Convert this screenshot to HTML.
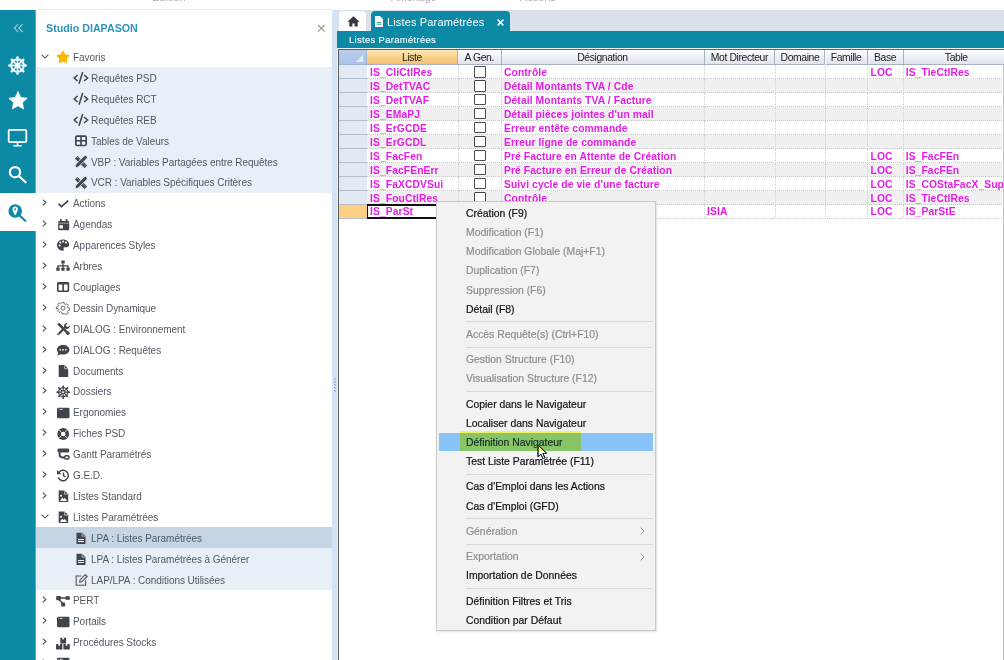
<!DOCTYPE html><html><head><meta charset="utf-8"><style>
*{margin:0;padding:0;box-sizing:border-box}
html,body{width:1004px;height:660px;overflow:hidden;background:#fff;font-family:"Liberation Sans", sans-serif}
.a{position:absolute}
.t{position:absolute;white-space:nowrap}
.tr{position:absolute;left:36px;width:296px;height:20.9px}
.tt{position:absolute;left:73px;top:0;line-height:20.9px;font-size:10px;letter-spacing:-0.05px;color:#535962;white-space:nowrap}
.gr{position:absolute;left:367px;width:636px;height:13.9px}
.gt{position:absolute;top:0.9px;line-height:13.9px;font-size:10.3px;letter-spacing:0.1px;font-weight:bold;color:#e51ee5;white-space:nowrap}
.hd{position:absolute;top:0;height:15.4px;line-height:15px;font-size:10.4px;letter-spacing:-0.4px;color:#222;text-align:center;background:linear-gradient(#fbfcfd,#dfe5ee);border-right:1px solid #a9b3c0;border-bottom:1px solid #a9b3c0}
.mi{position:absolute;left:466px;height:19.16px;line-height:19.16px;font-size:10.4px;white-space:nowrap;color:#121218;-webkit-text-stroke:0.2px currentColor;padding-top:0.6px}
.mi.d{color:#8e8e8e}
.ms{position:absolute;left:466px;width:187px;height:1px;background:#d9d9d9}
</style></head><body>

<div class="t" style="left:152px;top:-9px;font-size:11px;color:#aab">Edition</div>
<div class="t" style="left:391px;top:-9px;font-size:11px;color:#aab">Affichage</div>
<div class="t" style="left:520px;top:-9px;font-size:11px;color:#aab">Actions</div>
<div class="a" style="left:0;top:10px;width:36px;height:650px;background:#0c89a4"></div>
<div class="a" style="left:35px;top:10px;width:1px;height:650px;background:#8d9598"></div>
<div class="a" style="left:0;top:193.1px;width:36px;height:38.2px;background:#fff"></div>
<svg class="a" style="left:0;top:0" width="36" height="40" viewBox="0 0 36 40"><path d="M18.2 24L14.4 28.1 18.2 32.2M22.6 24L18.8 28.1 22.6 32.2" fill="none" stroke="#a6d2dc" stroke-width="1.1"/></svg>
<svg class="a" style="left:8px;top:55.5px" width="19" height="19" viewBox="0 0 19 19"><circle cx="9.5" cy="9.5" r="6.3" fill="none" stroke="#fff" stroke-width="2"/><circle cx="9.5" cy="9.5" r="2" fill="none" stroke="#fff" stroke-width="1.4"/><path d="M9.5 .8v17.4M.8 9.5h17.4M3.3 3.3l12.4 12.4M15.7 3.3L3.3 15.7" stroke="#fff" stroke-width="1.6"/><g fill="#fff"><circle cx="9.5" cy="1.4" r="1.2"/><circle cx="9.5" cy="17.6" r="1.2"/><circle cx="1.4" cy="9.5" r="1.2"/><circle cx="17.6" cy="9.5" r="1.2"/><circle cx="3.8" cy="3.8" r="1.2"/><circle cx="15.2" cy="15.2" r="1.2"/><circle cx="15.2" cy="3.8" r="1.2"/><circle cx="3.8" cy="15.2" r="1.2"/></g></svg>
<svg class="a" style="left:7.6px;top:91.4px" width="20" height="19" viewBox="0 0 20 19"><path d="M10.00 0.60L12.70 6.48L19.13 7.23L14.37 11.62L15.64 17.97L10.00 14.80L4.36 17.97L5.63 11.62L0.87 7.23L7.30 6.48z" fill="#fff" stroke="#fff" stroke-width=".8" stroke-linejoin="round"/></svg>
<svg class="a" style="left:7px;top:128px" width="22" height="19" viewBox="0 0 22 19"><rect x="1.7" y="1.8" width="17.6" height="12.4" rx="1.2" fill="none" stroke="#fff" stroke-width="1.8"/><path d="M10.5 14.5v3M6.3 17.8h8.4" stroke="#fff" stroke-width="1.5"/></svg>
<svg class="a" style="left:7px;top:164px" width="21" height="21" viewBox="0 0 21 21"><circle cx="8" cy="8.2" r="5.1" fill="none" stroke="#fff" stroke-width="2.2"/><path d="M11.8 12l6.8 6.3" stroke="#fff" stroke-width="2.2" stroke-linecap="round"/></svg>
<svg class="a" style="left:7px;top:202px" width="21" height="21" viewBox="0 0 21 21"><circle cx="8.2" cy="9" r="6.8" fill="#0c89a4"/><path d="M12.5 13.5l5.8 5.2" stroke="#0c89a4" stroke-width="2.2" stroke-linecap="round"/><path d="M8.2 4.5a2.7 2.7 0 0 0-2.7 2.7c0 2 2.7 6.3 2.7 6.3s2.7-4.3 2.7-6.3A2.7 2.7 0 0 0 8.2 4.5z" fill="#fff"/><circle cx="8.2" cy="7.2" r="1" fill="#0c89a4"/></svg>
<div class="a" style="left:36px;top:9px;width:296px;height:1px;background:#e3e9ef"></div>
<div class="t" style="left:46px;top:21.5px;font-size:10.7px;font-weight:bold;color:#2b94bb;line-height:13px">Studio DIAPASON</div>
<svg class="a" style="left:316.5px;top:24px" width="9" height="9" viewBox="0 0 9 9"><path d="M1 1l6.6 6.6M7.6 1L1 7.6" stroke="#9a9a9a" stroke-width="1.2"/></svg>
<div class="a" style="left:36px;top:67.45px;width:296px;height:125.40px;background:#e8eff7"></div>
<div class="a" style="left:36px;top:527.25px;width:296px;height:20.90px;background:#c5d5e3"></div>
<div class="a" style="left:36px;top:548.15px;width:296px;height:41.80px;background:#e8eff7"></div>
<div class="tr" style="top:46.55px"><svg style="position:absolute;left:5px;top:7.2px" width="8" height="5" viewBox="0 0 8 5"><path d="M.6 .6L4 4 7.4.6" fill="none" stroke="#4a505a" stroke-width="1.05"/></svg><svg style="position:absolute;left:20px;top:3.75px;overflow:visible" width="14" height="14" viewBox="0 0 14 14"><path d="M7.00 1.15L9.05 4.68L13.05 5.60L10.35 8.70L10.70 12.80L7.00 11.10L3.30 12.80L3.65 8.70L0.95 5.60L4.95 4.68z" fill="#fab800" stroke="#fab800" stroke-width="1" stroke-linejoin="round"/></svg><div class="tt" style="left:37px;top:1.5px">Favoris</div></div>
<div class="tr" style="top:67.45px"><svg style="position:absolute;left:37.2px;top:3.75px;overflow:visible" width="16" height="14" viewBox="0 0 16 14"><path d="M4.6 4L1.2 7l3.4 3M11.1 4l3.5 3-3.5 3M9.7 1.1L6 12.7" fill="none" stroke="#40454d" stroke-width="1.55"/></svg><div class="tt" style="left:55px;top:1.5px">Requêtes PSD</div></div>
<div class="tr" style="top:88.35px"><svg style="position:absolute;left:37.2px;top:3.75px;overflow:visible" width="16" height="14" viewBox="0 0 16 14"><path d="M4.6 4L1.2 7l3.4 3M11.1 4l3.5 3-3.5 3M9.7 1.1L6 12.7" fill="none" stroke="#40454d" stroke-width="1.55"/></svg><div class="tt" style="left:55px;top:1.5px">Requêtes RCT</div></div>
<div class="tr" style="top:109.25px"><svg style="position:absolute;left:37.2px;top:3.75px;overflow:visible" width="16" height="14" viewBox="0 0 16 14"><path d="M4.6 4L1.2 7l3.4 3M11.1 4l3.5 3-3.5 3M9.7 1.1L6 12.7" fill="none" stroke="#40454d" stroke-width="1.55"/></svg><div class="tt" style="left:55px;top:1.5px">Requêtes REB</div></div>
<div class="tr" style="top:130.15px"><svg style="position:absolute;left:37.8px;top:3.75px;overflow:visible" width="14" height="14" viewBox="0 0 14 14"><rect x="1.8" y="2.1" width="10.4" height="9.4" rx="1.2" fill="none" stroke="#40454d" stroke-width="1.6"/><path d="M1.8 6.8h10.4M7 2.1v9.4" stroke="#40454d" stroke-width="1.6"/></svg><div class="tt" style="left:55px;top:1.5px">Tables de Valeurs</div></div>
<div class="tr" style="top:151.05px"><svg style="position:absolute;left:37.8px;top:3.75px;overflow:visible" width="14" height="14" viewBox="0 0 14 14"><path d="M3.47 .93L.93 3.47 10.53 13.07 13.07 10.53z" fill="#40454d"/><path d="M3.9 3.2l-1-1M5.9 5.2l-1-1M9.2 8.5l-1-1M11.2 10.5l-1-1" stroke="#e8eff7" stroke-width=".8"/><path d="M1 12.7l.73-3.27 8.5-8.5a1.8 1.8 0 0 1 2.54 2.54l-8.5 8.5z" fill="#40454d" stroke="#e8eff7" stroke-width=".8"/></svg><div class="tt" style="left:55px;top:1.5px">VBP : Variables Partagées entre Requêtes</div></div>
<div class="tr" style="top:171.95px"><svg style="position:absolute;left:37.8px;top:3.75px;overflow:visible" width="14" height="14" viewBox="0 0 14 14"><path d="M3.47 .93L.93 3.47 10.53 13.07 13.07 10.53z" fill="#40454d"/><path d="M3.9 3.2l-1-1M5.9 5.2l-1-1M9.2 8.5l-1-1M11.2 10.5l-1-1" stroke="#e8eff7" stroke-width=".8"/><path d="M1 12.7l.73-3.27 8.5-8.5a1.8 1.8 0 0 1 2.54 2.54l-8.5 8.5z" fill="#40454d" stroke="#e8eff7" stroke-width=".8"/></svg><div class="tt" style="left:55px;top:1.5px">VCR : Variables Spécifiques Critères</div></div>
<div class="tr" style="top:192.85px"><svg style="position:absolute;left:6px;top:6.5px" width="6" height="7" viewBox="0 0 6 7"><path d="M.8 .6L4 3.5 .8 6.4" fill="none" stroke="#4a505a" stroke-width="1.05"/></svg><svg style="position:absolute;left:20px;top:3.75px;overflow:visible" width="14" height="14" viewBox="0 0 14 14"><path d="M2.6 6.9l2.8 2.8 6.9-6" fill="none" stroke="#40454d" stroke-width="1.7"/></svg><div class="tt" style="left:37px;top:1.5px">Actions</div></div>
<div class="tr" style="top:213.75px"><svg style="position:absolute;left:6px;top:6.5px" width="6" height="7" viewBox="0 0 6 7"><path d="M.8 .6L4 3.5 .8 6.4" fill="none" stroke="#4a505a" stroke-width="1.05"/></svg><svg style="position:absolute;left:20px;top:3.75px;overflow:visible" width="14" height="14" viewBox="0 0 14 14"><rect x="2.2" y="2.9" width="11" height="9.4" rx="1" fill="#40454d"/><rect x="4" y="1.1" width="1.7" height="2.6" fill="#40454d"/><rect x="9.7" y="1.1" width="1.7" height="2.6" fill="#40454d"/><path d="M2.2 5.2h11" stroke="#fff" stroke-width=".5"/><rect x="3.5" y="7.2" width="3.4" height="3.3" fill="#fff"/></svg><div class="tt" style="left:37px;top:1.5px">Agendas</div></div>
<div class="tr" style="top:234.65px"><svg style="position:absolute;left:6px;top:6.5px" width="6" height="7" viewBox="0 0 6 7"><path d="M.8 .6L4 3.5 .8 6.4" fill="none" stroke="#4a505a" stroke-width="1.05"/></svg><svg style="position:absolute;left:20px;top:3.75px;overflow:visible" width="14" height="14" viewBox="0 0 14 14"><path d="M7 1.5C3.7 1.5 1 4 1 7.1c0 3.1 2.6 5.6 5.6 5.6 1.3 0 1.6-.9 1.1-1.7-.5-.8-.1-1.8.9-1.8h1.8c1.6 0 2.8-1.2 2.8-2.8C13.2 3.7 10.4 1.5 7 1.5z" fill="#40454d"/><circle cx="3.7" cy="7.4" r="1" fill="#fff"/><circle cx="4.4" cy="4.6" r="1" fill="#fff"/><circle cx="7.2" cy="3.6" r="1" fill="#fff"/><circle cx="10" cy="4.6" r="1" fill="#fff"/></svg><div class="tt" style="left:37px;top:1.5px">Apparences Styles</div></div>
<div class="tr" style="top:255.55px"><svg style="position:absolute;left:6px;top:6.5px" width="6" height="7" viewBox="0 0 6 7"><path d="M.8 .6L4 3.5 .8 6.4" fill="none" stroke="#4a505a" stroke-width="1.05"/></svg><svg style="position:absolute;left:20px;top:3.75px;overflow:visible" width="14" height="14" viewBox="0 0 14 14"><rect x="5.3" y="1.5" width="3.4" height="3" rx=".5" fill="#40454d"/><path d="M7 4.5v2.3M1.9 6.8h10.2M1.9 6.6v2.3M7 6.6v2.3M12.1 6.6v2.3" fill="none" stroke="#40454d" stroke-width="1.2"/><rect x=".3" y="8.6" width="3.3" height="3.2" rx=".6" fill="#40454d"/><rect x="5.35" y="8.6" width="3.3" height="3.2" rx=".6" fill="#40454d"/><rect x="10.4" y="8.6" width="3.3" height="3.2" rx=".6" fill="#40454d"/></svg><div class="tt" style="left:37px;top:1.5px">Arbres</div></div>
<div class="tr" style="top:276.45px"><svg style="position:absolute;left:6px;top:6.5px" width="6" height="7" viewBox="0 0 6 7"><path d="M.8 .6L4 3.5 .8 6.4" fill="none" stroke="#4a505a" stroke-width="1.05"/></svg><svg style="position:absolute;left:20px;top:3.75px;overflow:visible" width="14" height="14" viewBox="0 0 14 14"><rect x="1.8" y="2.8" width="10.6" height="8.5" rx=".8" fill="none" stroke="#40454d" stroke-width="1.6"/><path d="M1.8 3.4h10.6" stroke="#40454d" stroke-width="2.2"/><path d="M7.1 3v8.3" stroke="#40454d" stroke-width="1.6"/></svg><div class="tt" style="left:37px;top:1.5px">Couplages</div></div>
<div class="tr" style="top:297.35px"><svg style="position:absolute;left:6px;top:6.5px" width="6" height="7" viewBox="0 0 6 7"><path d="M.8 .6L4 3.5 .8 6.4" fill="none" stroke="#4a505a" stroke-width="1.05"/></svg><svg style="position:absolute;left:20px;top:3.75px;overflow:visible" width="14" height="14" viewBox="0 0 14 14"><circle cx="7" cy="7.1" r="2" fill="none" stroke="#5a5f66" stroke-width=".9"/><path d="M6 1.4h2l.35 1.6 1.2.55 1.4-.85 1.4 1.4-.85 1.4.55 1.2 1.6.35v2l-1.6.35-.55 1.2.85 1.4-1.4 1.4-1.4-.85-1.2.55L8 12.8H6l-.35-1.6-1.2-.55-1.4.85-1.4-1.4.85-1.4-.55-1.2L.35 8.1v-2l1.6-.35.55-1.2-.85-1.4 1.4-1.4 1.4.85 1.2-.55z" fill="none" stroke="#5a5f66" stroke-width=".9" stroke-linejoin="round"/></svg><div class="tt" style="left:37px;top:1.5px">Dessin Dynamique</div></div>
<div class="tr" style="top:318.25px"><svg style="position:absolute;left:6px;top:6.5px" width="6" height="7" viewBox="0 0 6 7"><path d="M.8 .6L4 3.5 .8 6.4" fill="none" stroke="#4a505a" stroke-width="1.05"/></svg><svg style="position:absolute;left:20px;top:3.75px;overflow:visible" width="14" height="14" viewBox="0 0 14 14"><path d="M1.6 1.4l1.9-.3 8.2 8.2 1.6.6.6 1.6-1.7 1.7-1.6-.6-.6-1.6L1.8 2.9z" fill="#40454d"/><path d="M2.3 12.2l6.4-6.4" stroke="#40454d" stroke-width="2.2" stroke-linecap="round"/><path d="M8 4.7a3 3 0 0 1 3.7-3.5l-1.8 1.8.4 1.6 1.6.4 1.8-1.8A3 3 0 0 1 10.2 6.9z" fill="#40454d"/><circle cx="2.4" cy="12.1" r=".5" fill="#fff"/></svg><div class="tt" style="left:37px;top:1.5px">DIALOG : Environnement</div></div>
<div class="tr" style="top:339.15px"><svg style="position:absolute;left:6px;top:6.5px" width="6" height="7" viewBox="0 0 6 7"><path d="M.8 .6L4 3.5 .8 6.4" fill="none" stroke="#4a505a" stroke-width="1.05"/></svg><svg style="position:absolute;left:20px;top:3.75px;overflow:visible" width="14" height="14" viewBox="0 0 14 14"><path d="M7 2.1C3.6 2.1 1 4.2 1 6.8c0 1.1.5 2.1 1.3 2.9-.2 1-.9 2-1.3 2.7 1.4 0 2.6-.6 3.4-1.2.8.3 1.7.4 2.6.4 3.5 0 6.4-2.1 6.4-4.8S10.5 2.1 7 2.1z" fill="#40454d"/><circle cx="4.3" cy="6.8" r=".85" fill="#fff"/><circle cx="7.1" cy="6.8" r=".85" fill="#fff"/><circle cx="9.9" cy="6.8" r=".85" fill="#fff"/></svg><div class="tt" style="left:37px;top:1.5px">DIALOG : Requêtes</div></div>
<div class="tr" style="top:360.05px"><svg style="position:absolute;left:6px;top:6.5px" width="6" height="7" viewBox="0 0 6 7"><path d="M.8 .6L4 3.5 .8 6.4" fill="none" stroke="#4a505a" stroke-width="1.05"/></svg><svg style="position:absolute;left:20px;top:3.75px;overflow:visible" width="14" height="14" viewBox="0 0 14 14"><path d="M2.7 1.1h5.9l3.6 3.6v8.2H2.7z" fill="#40454d"/><path d="M8.6 1.3v3.4H12" fill="none" stroke="#fff" stroke-width=".6"/></svg><div class="tt" style="left:37px;top:1.5px">Documents</div></div>
<div class="tr" style="top:380.95px"><svg style="position:absolute;left:6px;top:6.5px" width="6" height="7" viewBox="0 0 6 7"><path d="M.8 .6L4 3.5 .8 6.4" fill="none" stroke="#4a505a" stroke-width="1.05"/></svg><svg style="position:absolute;left:20px;top:3.75px;overflow:visible" width="14" height="14" viewBox="0 0 14 14"><circle cx="7.2" cy="7.2" r="4.5" fill="none" stroke="#40454d" stroke-width="1.3"/><circle cx="7.2" cy="7.2" r="1.5" fill="none" stroke="#40454d" stroke-width="1.1"/><path d="M7.2 1.2v4.5M7.2 8.7v4.5M1.2 7.2h4.5M8.7 7.2h4.5M2.95 2.95l3.2 3.2M8.25 8.25l3.2 3.2M11.45 2.95l-3.2 3.2M6.15 8.25l-3.2 3.2" stroke="#40454d" stroke-width="1.2"/><g fill="#40454d"><circle cx="7.2" cy="1.3" r=".9"/><circle cx="7.2" cy="13.1" r=".9"/><circle cx="1.3" cy="7.2" r=".9"/><circle cx="13.1" cy="7.2" r=".9"/><circle cx="3" cy="3" r=".9"/><circle cx="11.4" cy="11.4" r=".9"/><circle cx="11.4" cy="3" r=".9"/><circle cx="3" cy="11.4" r=".9"/></g></svg><div class="tt" style="left:37px;top:1.5px">Dossiers</div></div>
<div class="tr" style="top:401.85px"><svg style="position:absolute;left:6px;top:6.5px" width="6" height="7" viewBox="0 0 6 7"><path d="M.8 .6L4 3.5 .8 6.4" fill="none" stroke="#4a505a" stroke-width="1.05"/></svg><svg style="position:absolute;left:20px;top:3.75px;overflow:visible" width="14" height="14" viewBox="0 0 14 14"><rect x="1" y="1.7" width="12.5" height="10.6" rx="1.3" fill="#40454d"/><path d="M2.5 3.4h.8M4 3.4h2.6" stroke="#fff" stroke-width=".8"/></svg><div class="tt" style="left:37px;top:1.5px">Ergonomies</div></div>
<div class="tr" style="top:422.75px"><svg style="position:absolute;left:6px;top:6.5px" width="6" height="7" viewBox="0 0 6 7"><path d="M.8 .6L4 3.5 .8 6.4" fill="none" stroke="#4a505a" stroke-width="1.05"/></svg><svg style="position:absolute;left:20px;top:3.75px;overflow:visible" width="14" height="14" viewBox="0 0 14 14"><circle cx="7.2" cy="7" r="5.9" fill="#40454d"/><circle cx="7.2" cy="7" r="2.3" fill="#fff"/><path d="M3.1 2.9l2.3 2.3M11.3 2.9L9 5.2M3.1 11.1l2.3-2.3M11.3 11.1L9 8.8" stroke="#fff" stroke-width=".8"/></svg><div class="tt" style="left:37px;top:1.5px">Fiches PSD</div></div>
<div class="tr" style="top:443.65px"><svg style="position:absolute;left:6px;top:6.5px" width="6" height="7" viewBox="0 0 6 7"><path d="M.8 .6L4 3.5 .8 6.4" fill="none" stroke="#4a505a" stroke-width="1.05"/></svg><svg style="position:absolute;left:20px;top:3.75px;overflow:visible" width="14" height="14" viewBox="0 0 14 14"><rect x="1.5" y="1.5" width="11.7" height="4" rx="1.4" fill="#40454d"/><path d="M3.6 5v2.6c0 2 1 2.9 2.9 2.9h2" fill="none" stroke="#40454d" stroke-width="1.9"/><rect x="8.5" y="8.8" width="4.6" height="3.2" rx="1.6" fill="none" stroke="#40454d" stroke-width="1.5"/></svg><div class="tt" style="left:37px;top:1.5px">Gantt Paramétrés</div></div>
<div class="tr" style="top:464.55px"><svg style="position:absolute;left:6px;top:6.5px" width="6" height="7" viewBox="0 0 6 7"><path d="M.8 .6L4 3.5 .8 6.4" fill="none" stroke="#4a505a" stroke-width="1.05"/></svg><svg style="position:absolute;left:20px;top:3.75px;overflow:visible" width="14" height="14" viewBox="0 0 14 14"><path d="M2.8 4.6A5.2 5.2 0 1 1 2.3 9.4" fill="none" stroke="#40454d" stroke-width="1.5"/><path d="M1 1.9v4.4h4.4z" fill="#40454d"/><path d="M7.5 4.5v3.1l2 1.4" fill="none" stroke="#40454d" stroke-width="1.4"/></svg><div class="tt" style="left:37px;top:1.5px">G.E.D.</div></div>
<div class="tr" style="top:485.45px"><svg style="position:absolute;left:6px;top:6.5px" width="6" height="7" viewBox="0 0 6 7"><path d="M.8 .6L4 3.5 .8 6.4" fill="none" stroke="#4a505a" stroke-width="1.05"/></svg><svg style="position:absolute;left:20px;top:3.75px;overflow:visible" width="14" height="14" viewBox="0 0 14 14"><path d="M2.7 1.6h5.9l3.6 3.6v7.9H2.7z" fill="#40454d"/><path d="M8.6 1.8v3.4H12" fill="none" stroke="#fff" stroke-width=".6"/><path d="M3.9 12l2.3-3.3 1.4 1.4 1.3-1.2 2.1 3.1z" fill="#fff"/><circle cx="5.1" cy="6.7" r="1" fill="#fff"/></svg><div class="tt" style="left:37px;top:1.5px">Listes Standard</div></div>
<div class="tr" style="top:506.35px"><svg style="position:absolute;left:5px;top:7.2px" width="8" height="5" viewBox="0 0 8 5"><path d="M.6 .6L4 4 7.4.6" fill="none" stroke="#4a505a" stroke-width="1.05"/></svg><svg style="position:absolute;left:20px;top:3.75px;overflow:visible" width="14" height="14" viewBox="0 0 14 14"><path d="M2.7 1.6h5.9l3.6 3.6v7.9H2.7z" fill="#40454d"/><path d="M8.6 1.8v3.4H12" fill="none" stroke="#fff" stroke-width=".6"/><path d="M3.9 12l2.3-3.3 1.4 1.4 1.3-1.2 2.1 3.1z" fill="#fff"/><circle cx="5.1" cy="6.7" r="1" fill="#fff"/></svg><div class="tt" style="left:37px;top:1.5px">Listes Paramétrées</div></div>
<div class="tr" style="top:527.25px"><svg style="position:absolute;left:37.5px;top:3.75px;overflow:visible" width="14" height="14" viewBox="0 0 14 14"><path d="M2.5 1.7h5.6l3.4 3.4v7.9h-9z" fill="#40454d"/><path d="M8.1 1.9v3.2h3.2" fill="none" stroke="#fff" stroke-width=".6"/><path d="M4 8.6h6M4 10.6h6" stroke="#fff" stroke-width="1"/></svg><div class="tt" style="left:55px;top:1.5px">LPA : Listes Paramétrées</div></div>
<div class="tr" style="top:548.15px"><svg style="position:absolute;left:37.5px;top:3.75px;overflow:visible" width="14" height="14" viewBox="0 0 14 14"><path d="M2.5 1.7h5.6l3.4 3.4v7.9h-9z" fill="#40454d"/><path d="M8.1 1.9v3.2h3.2" fill="none" stroke="#fff" stroke-width=".6"/><path d="M4 8.6h6M4 10.6h6" stroke="#fff" stroke-width="1"/></svg><div class="tt" style="left:55px;top:1.5px">LPA : Listes Paramétrées à Générer</div></div>
<div class="tr" style="top:569.05px"><svg style="position:absolute;left:37.5px;top:3.75px;overflow:visible" width="14" height="14" viewBox="0 0 14 14"><path d="M7.2 3H2.2v9.2h9.4V7.2" fill="none" stroke="#50555c" stroke-width="1.1"/><path d="M5.6 9.2l.5-2.3 5.2-5.2 1.8 1.8-5.2 5.2z" fill="none" stroke="#50555c" stroke-width="1.1" stroke-linejoin="round"/></svg><div class="tt" style="left:55px;top:1.5px">LAP/LPA : Conditions Utilisées</div></div>
<div class="tr" style="top:589.95px"><svg style="position:absolute;left:6px;top:6.5px" width="6" height="7" viewBox="0 0 6 7"><path d="M.8 .6L4 3.5 .8 6.4" fill="none" stroke="#4a505a" stroke-width="1.05"/></svg><svg style="position:absolute;left:20px;top:3.75px;overflow:visible" width="14" height="14" viewBox="0 0 14 14"><rect x=".2" y="1.9" width="4.5" height="4.3" rx=".6" fill="#40454d"/><rect x="9.5" y="2.2" width="4.3" height="3.6" rx=".6" fill="#40454d"/><rect x="5.2" y="8.6" width="3.9" height="3.9" rx=".6" fill="#40454d"/><path d="M4 4h5.8M2.8 5.5l4.2 4.3" stroke="#40454d" stroke-width="1.4"/></svg><div class="tt" style="left:37px;top:1.5px">PERT</div></div>
<div class="tr" style="top:610.85px"><svg style="position:absolute;left:6px;top:6.5px" width="6" height="7" viewBox="0 0 6 7"><path d="M.8 .6L4 3.5 .8 6.4" fill="none" stroke="#4a505a" stroke-width="1.05"/></svg><svg style="position:absolute;left:20px;top:3.75px;overflow:visible" width="14" height="14" viewBox="0 0 14 14"><rect x="1" y="1.7" width="12.5" height="10.6" rx="1.3" fill="#40454d"/><path d="M2.5 3.4h.8M4 3.4h2.6" stroke="#fff" stroke-width=".8"/></svg><div class="tt" style="left:37px;top:1.5px">Portails</div></div>
<div class="tr" style="top:631.75px"><svg style="position:absolute;left:6px;top:6.5px" width="6" height="7" viewBox="0 0 6 7"><path d="M.8 .6L4 3.5 .8 6.4" fill="none" stroke="#4a505a" stroke-width="1.05"/></svg><svg style="position:absolute;left:20px;top:3.75px;overflow:visible" width="14" height="14" viewBox="0 0 14 14"><rect x="4.3" y="1.7" width="5.8" height="5.8" rx=".4" fill="#40454d"/><rect x="6.4" y="1.7" width="1.6" height="1.7" fill="#fff"/><rect x="0" y="8" width="6.4" height="5.4" rx=".4" fill="#40454d"/><rect x="2.4" y="8" width="1.6" height="1.7" fill="#fff"/><rect x="7.4" y="8" width="6.4" height="5.4" rx=".4" fill="#40454d"/><rect x="9.8" y="8" width="1.6" height="1.7" fill="#fff"/></svg><div class="tt" style="left:37px;top:1.5px">Procédures Stocks</div></div>
<div class="tr" style="top:652.65px"><svg style="position:absolute;left:6px;top:6.5px" width="6" height="7" viewBox="0 0 6 7"><path d="M.8 .6L4 3.5 .8 6.4" fill="none" stroke="#4a505a" stroke-width="1.05"/></svg><svg style="position:absolute;left:20px;top:3.75px;overflow:visible" width="14" height="14" viewBox="0 0 14 14"><rect x="1" y="1.7" width="12.5" height="10.6" rx="1.3" fill="#40454d"/><path d="M2.5 3.4h.8M4 3.4h2.6" stroke="#fff" stroke-width=".8"/></svg></div>
<div class="a" style="left:332px;top:10px;width:6px;height:650px;background:#d3e2f5"></div>
<svg class="a" style="left:333px;top:377px" width="4" height="17" viewBox="0 0 4 17"><path d="M1 1l2 1.5M1 4l2 1.5M1 7l2 1.5M1 10l2 1.5M1 13l2 1.5" stroke="#6b8fc5" stroke-width=".8"/></svg>
<div class="a" style="left:338px;top:10px;width:666px;height:21px;background:#d9e1ea"></div>
<div class="a" style="left:339px;top:11px;width:27px;height:20px;background:#fcfdfd;border-radius:4px 4px 0 0"></div>
<svg class="a" style="left:347px;top:16px" width="13" height="11" viewBox="0 0 13 11"><path d="M6.5 .3L.4 5.8h1.9V10.6h3.1V7.6h2.2v3h3.1V5.8h1.9z" fill="#363944"/></svg>
<div class="a" style="left:371px;top:11px;width:139px;height:20px;background:#0c89a4;border-radius:4px 4px 0 0"></div>
<svg class="a" style="left:375px;top:16px" width="8" height="11" viewBox="0 0 8 11"><path d="M0 0h5l3 3v8H0z" fill="#fff"/><path d="M1.8 6.4h4.4M1.8 8.2h4.4" stroke="#0c89a4" stroke-width=".9"/></svg>
<div class="t" style="left:387px;top:15px;font-size:11px;letter-spacing:0.15px;color:#fff;line-height:14px">Listes Paramétrées</div>
<svg class="a" style="left:497px;top:19px" width="7" height="7" viewBox="0 0 7 7"><path d="M.6 .6l5.8 5.8M6.4 .6L.6 6.4" stroke="#fff" stroke-width="1.5"/></svg>
<div class="a" style="left:336.7px;top:31px;width:667.3px;height:16.8px;background:#0c89a4"></div>
<div class="t" style="left:349px;top:34px;font-size:9.4px;letter-spacing:0.35px;color:#f0fafc;-webkit-text-stroke:0.15px #f0fafc;line-height:12px">Listes Paramétrées</div>
<div class="a" style="left:336.7px;top:47.8px;width:667.3px;height:1.4px;background:#e9f1f5"></div>
<div class="a" style="left:336.7px;top:47.8px;width:1.5px;height:612.2px;background:#eef2f6"></div>
<div class="a" style="left:338.2px;top:49.2px;width:665.8px;height:610.8px;background:#fff;border-left:1px solid #5f5b57;border-top:1px solid #6a625c"></div>
<div class="a" style="left:1002.5px;top:50px;width:1.5px;height:610px;background:#c4c4c4"></div>
<div class="a" style="left:339px;top:50px;width:28px;height:15.4px;background:linear-gradient(#b9cdea,#aac3e8);border-right:1px solid #9fb4d0;border-bottom:1px solid #9fb4d0"></div>
<svg class="a" style="left:356px;top:55px" width="7" height="7" viewBox="0 0 7 7"><path d="M7 0v7H0z" fill="#e6eef8"/></svg>
<div class="hd" style="left:367px;width:91.0px;top:50px;background:linear-gradient(#fde7b4,#f6c16b);border-right-color:#d7a65a;">Liste</div>
<div class="hd" style="left:458px;width:43.5px;top:50px;">A Gen.</div>
<div class="hd" style="left:501.5px;width:203.0px;top:50px;">Désignation</div>
<div class="hd" style="left:704.5px;width:70.9px;top:50px;">Mot Directeur</div>
<div class="hd" style="left:775.4px;width:50.1px;top:50px;">Domaine</div>
<div class="hd" style="left:825.5px;width:42.1px;top:50px;">Famille</div>
<div class="hd" style="left:867.6px;width:36.0px;top:50px;">Base</div>
<div class="hd" style="left:903.6px;width:106.4px;top:50px;">Table</div>
<div class="a" style="left:339px;top:65.40px;width:28px;height:13.92px;background:#e2e9f5;border-bottom:1px solid #b6bfcb"></div>
<div class="a" style="left:367px;top:65.40px;width:635px;height:13.92px;background:#ffffff;border-bottom:1px dotted #c9c9c9"></div>
<div class="a" style="left:457.6px;top:65.40px;width:1px;height:13.92px;border-left:1px dotted #d0d0d0"></div>
<div class="a" style="left:501.1px;top:65.40px;width:1px;height:13.92px;border-left:1px dotted #d0d0d0"></div>
<div class="a" style="left:704.1px;top:65.40px;width:1px;height:13.92px;border-left:1px dotted #d0d0d0"></div>
<div class="a" style="left:775.0px;top:65.40px;width:1px;height:13.92px;border-left:1px dotted #d0d0d0"></div>
<div class="a" style="left:825.1px;top:65.40px;width:1px;height:13.92px;border-left:1px dotted #d0d0d0"></div>
<div class="a" style="left:867.2px;top:65.40px;width:1px;height:13.92px;border-left:1px dotted #d0d0d0"></div>
<div class="a" style="left:903.2px;top:65.40px;width:1px;height:13.92px;border-left:1px dotted #d0d0d0"></div>
<div class="gr" style="top:65.40px"><div class="gt" style="left:3px">IS_CliCtlRes</div><div class="a" style="left:107.3px;top:1px;width:11.3px;height:11.2px;border:1.2px solid #4a4a4a;border-radius:1px;background:#fff"></div><div class="gt" style="left:137px">Contrôle</div><div class="gt" style="left:340px"></div><div class="gt" style="left:503.5px">LOC</div><div class="gt" style="left:538.7px">IS_TieCtlRes</div></div>
<div class="a" style="left:339px;top:79.32px;width:28px;height:13.92px;background:#e2e9f5;border-bottom:1px solid #b6bfcb"></div>
<div class="a" style="left:367px;top:79.32px;width:635px;height:13.92px;background:#f0f0f0;border-bottom:1px dotted #c9c9c9"></div>
<div class="a" style="left:457.6px;top:79.32px;width:1px;height:13.92px;border-left:1px dotted #d0d0d0"></div>
<div class="a" style="left:501.1px;top:79.32px;width:1px;height:13.92px;border-left:1px dotted #d0d0d0"></div>
<div class="a" style="left:704.1px;top:79.32px;width:1px;height:13.92px;border-left:1px dotted #d0d0d0"></div>
<div class="a" style="left:775.0px;top:79.32px;width:1px;height:13.92px;border-left:1px dotted #d0d0d0"></div>
<div class="a" style="left:825.1px;top:79.32px;width:1px;height:13.92px;border-left:1px dotted #d0d0d0"></div>
<div class="a" style="left:867.2px;top:79.32px;width:1px;height:13.92px;border-left:1px dotted #d0d0d0"></div>
<div class="a" style="left:903.2px;top:79.32px;width:1px;height:13.92px;border-left:1px dotted #d0d0d0"></div>
<div class="gr" style="top:79.32px"><div class="gt" style="left:3px">IS_DetTVAC</div><div class="a" style="left:107.3px;top:1px;width:11.3px;height:11.2px;border:1.2px solid #4a4a4a;border-radius:1px;background:#fff"></div><div class="gt" style="left:137px">Détail Montants TVA / Cde</div><div class="gt" style="left:340px"></div><div class="gt" style="left:503.5px"></div><div class="gt" style="left:538.7px"></div></div>
<div class="a" style="left:339px;top:93.24px;width:28px;height:13.92px;background:#e2e9f5;border-bottom:1px solid #b6bfcb"></div>
<div class="a" style="left:367px;top:93.24px;width:635px;height:13.92px;background:#ffffff;border-bottom:1px dotted #c9c9c9"></div>
<div class="a" style="left:457.6px;top:93.24px;width:1px;height:13.92px;border-left:1px dotted #d0d0d0"></div>
<div class="a" style="left:501.1px;top:93.24px;width:1px;height:13.92px;border-left:1px dotted #d0d0d0"></div>
<div class="a" style="left:704.1px;top:93.24px;width:1px;height:13.92px;border-left:1px dotted #d0d0d0"></div>
<div class="a" style="left:775.0px;top:93.24px;width:1px;height:13.92px;border-left:1px dotted #d0d0d0"></div>
<div class="a" style="left:825.1px;top:93.24px;width:1px;height:13.92px;border-left:1px dotted #d0d0d0"></div>
<div class="a" style="left:867.2px;top:93.24px;width:1px;height:13.92px;border-left:1px dotted #d0d0d0"></div>
<div class="a" style="left:903.2px;top:93.24px;width:1px;height:13.92px;border-left:1px dotted #d0d0d0"></div>
<div class="gr" style="top:93.24px"><div class="gt" style="left:3px">IS_DetTVAF</div><div class="a" style="left:107.3px;top:1px;width:11.3px;height:11.2px;border:1.2px solid #4a4a4a;border-radius:1px;background:#fff"></div><div class="gt" style="left:137px">Détail Montants TVA / Facture</div><div class="gt" style="left:340px"></div><div class="gt" style="left:503.5px"></div><div class="gt" style="left:538.7px"></div></div>
<div class="a" style="left:339px;top:107.16px;width:28px;height:13.92px;background:#e2e9f5;border-bottom:1px solid #b6bfcb"></div>
<div class="a" style="left:367px;top:107.16px;width:635px;height:13.92px;background:#f0f0f0;border-bottom:1px dotted #c9c9c9"></div>
<div class="a" style="left:457.6px;top:107.16px;width:1px;height:13.92px;border-left:1px dotted #d0d0d0"></div>
<div class="a" style="left:501.1px;top:107.16px;width:1px;height:13.92px;border-left:1px dotted #d0d0d0"></div>
<div class="a" style="left:704.1px;top:107.16px;width:1px;height:13.92px;border-left:1px dotted #d0d0d0"></div>
<div class="a" style="left:775.0px;top:107.16px;width:1px;height:13.92px;border-left:1px dotted #d0d0d0"></div>
<div class="a" style="left:825.1px;top:107.16px;width:1px;height:13.92px;border-left:1px dotted #d0d0d0"></div>
<div class="a" style="left:867.2px;top:107.16px;width:1px;height:13.92px;border-left:1px dotted #d0d0d0"></div>
<div class="a" style="left:903.2px;top:107.16px;width:1px;height:13.92px;border-left:1px dotted #d0d0d0"></div>
<div class="gr" style="top:107.16px"><div class="gt" style="left:3px">IS_EMaPJ</div><div class="a" style="left:107.3px;top:1px;width:11.3px;height:11.2px;border:1.2px solid #4a4a4a;border-radius:1px;background:#fff"></div><div class="gt" style="left:137px">Détail pièces jointes d'un mail</div><div class="gt" style="left:340px"></div><div class="gt" style="left:503.5px"></div><div class="gt" style="left:538.7px"></div></div>
<div class="a" style="left:339px;top:121.08px;width:28px;height:13.92px;background:#e2e9f5;border-bottom:1px solid #b6bfcb"></div>
<div class="a" style="left:367px;top:121.08px;width:635px;height:13.92px;background:#ffffff;border-bottom:1px dotted #c9c9c9"></div>
<div class="a" style="left:457.6px;top:121.08px;width:1px;height:13.92px;border-left:1px dotted #d0d0d0"></div>
<div class="a" style="left:501.1px;top:121.08px;width:1px;height:13.92px;border-left:1px dotted #d0d0d0"></div>
<div class="a" style="left:704.1px;top:121.08px;width:1px;height:13.92px;border-left:1px dotted #d0d0d0"></div>
<div class="a" style="left:775.0px;top:121.08px;width:1px;height:13.92px;border-left:1px dotted #d0d0d0"></div>
<div class="a" style="left:825.1px;top:121.08px;width:1px;height:13.92px;border-left:1px dotted #d0d0d0"></div>
<div class="a" style="left:867.2px;top:121.08px;width:1px;height:13.92px;border-left:1px dotted #d0d0d0"></div>
<div class="a" style="left:903.2px;top:121.08px;width:1px;height:13.92px;border-left:1px dotted #d0d0d0"></div>
<div class="gr" style="top:121.08px"><div class="gt" style="left:3px">IS_ErGCDE</div><div class="a" style="left:107.3px;top:1px;width:11.3px;height:11.2px;border:1.2px solid #4a4a4a;border-radius:1px;background:#fff"></div><div class="gt" style="left:137px">Erreur entête commande</div><div class="gt" style="left:340px"></div><div class="gt" style="left:503.5px"></div><div class="gt" style="left:538.7px"></div></div>
<div class="a" style="left:339px;top:135.00px;width:28px;height:13.92px;background:#e2e9f5;border-bottom:1px solid #b6bfcb"></div>
<div class="a" style="left:367px;top:135.00px;width:635px;height:13.92px;background:#f0f0f0;border-bottom:1px dotted #c9c9c9"></div>
<div class="a" style="left:457.6px;top:135.00px;width:1px;height:13.92px;border-left:1px dotted #d0d0d0"></div>
<div class="a" style="left:501.1px;top:135.00px;width:1px;height:13.92px;border-left:1px dotted #d0d0d0"></div>
<div class="a" style="left:704.1px;top:135.00px;width:1px;height:13.92px;border-left:1px dotted #d0d0d0"></div>
<div class="a" style="left:775.0px;top:135.00px;width:1px;height:13.92px;border-left:1px dotted #d0d0d0"></div>
<div class="a" style="left:825.1px;top:135.00px;width:1px;height:13.92px;border-left:1px dotted #d0d0d0"></div>
<div class="a" style="left:867.2px;top:135.00px;width:1px;height:13.92px;border-left:1px dotted #d0d0d0"></div>
<div class="a" style="left:903.2px;top:135.00px;width:1px;height:13.92px;border-left:1px dotted #d0d0d0"></div>
<div class="gr" style="top:135.00px"><div class="gt" style="left:3px">IS_ErGCDL</div><div class="a" style="left:107.3px;top:1px;width:11.3px;height:11.2px;border:1.2px solid #4a4a4a;border-radius:1px;background:#fff"></div><div class="gt" style="left:137px">Erreur ligne de commande</div><div class="gt" style="left:340px"></div><div class="gt" style="left:503.5px"></div><div class="gt" style="left:538.7px"></div></div>
<div class="a" style="left:339px;top:148.92px;width:28px;height:13.92px;background:#e2e9f5;border-bottom:1px solid #b6bfcb"></div>
<div class="a" style="left:367px;top:148.92px;width:635px;height:13.92px;background:#ffffff;border-bottom:1px dotted #c9c9c9"></div>
<div class="a" style="left:457.6px;top:148.92px;width:1px;height:13.92px;border-left:1px dotted #d0d0d0"></div>
<div class="a" style="left:501.1px;top:148.92px;width:1px;height:13.92px;border-left:1px dotted #d0d0d0"></div>
<div class="a" style="left:704.1px;top:148.92px;width:1px;height:13.92px;border-left:1px dotted #d0d0d0"></div>
<div class="a" style="left:775.0px;top:148.92px;width:1px;height:13.92px;border-left:1px dotted #d0d0d0"></div>
<div class="a" style="left:825.1px;top:148.92px;width:1px;height:13.92px;border-left:1px dotted #d0d0d0"></div>
<div class="a" style="left:867.2px;top:148.92px;width:1px;height:13.92px;border-left:1px dotted #d0d0d0"></div>
<div class="a" style="left:903.2px;top:148.92px;width:1px;height:13.92px;border-left:1px dotted #d0d0d0"></div>
<div class="gr" style="top:148.92px"><div class="gt" style="left:3px">IS_FacFen</div><div class="a" style="left:107.3px;top:1px;width:11.3px;height:11.2px;border:1.2px solid #4a4a4a;border-radius:1px;background:#fff"></div><div class="gt" style="left:137px">Pré Facture en Attente de Création</div><div class="gt" style="left:340px"></div><div class="gt" style="left:503.5px">LOC</div><div class="gt" style="left:538.7px">IS_FacFEn</div></div>
<div class="a" style="left:339px;top:162.84px;width:28px;height:13.92px;background:#e2e9f5;border-bottom:1px solid #b6bfcb"></div>
<div class="a" style="left:367px;top:162.84px;width:635px;height:13.92px;background:#f0f0f0;border-bottom:1px dotted #c9c9c9"></div>
<div class="a" style="left:457.6px;top:162.84px;width:1px;height:13.92px;border-left:1px dotted #d0d0d0"></div>
<div class="a" style="left:501.1px;top:162.84px;width:1px;height:13.92px;border-left:1px dotted #d0d0d0"></div>
<div class="a" style="left:704.1px;top:162.84px;width:1px;height:13.92px;border-left:1px dotted #d0d0d0"></div>
<div class="a" style="left:775.0px;top:162.84px;width:1px;height:13.92px;border-left:1px dotted #d0d0d0"></div>
<div class="a" style="left:825.1px;top:162.84px;width:1px;height:13.92px;border-left:1px dotted #d0d0d0"></div>
<div class="a" style="left:867.2px;top:162.84px;width:1px;height:13.92px;border-left:1px dotted #d0d0d0"></div>
<div class="a" style="left:903.2px;top:162.84px;width:1px;height:13.92px;border-left:1px dotted #d0d0d0"></div>
<div class="gr" style="top:162.84px"><div class="gt" style="left:3px">IS_FacFEnErr</div><div class="a" style="left:107.3px;top:1px;width:11.3px;height:11.2px;border:1.2px solid #4a4a4a;border-radius:1px;background:#fff"></div><div class="gt" style="left:137px">Pré Facture en Erreur de Création</div><div class="gt" style="left:340px"></div><div class="gt" style="left:503.5px">LOC</div><div class="gt" style="left:538.7px">IS_FacFEn</div></div>
<div class="a" style="left:339px;top:176.76px;width:28px;height:13.92px;background:#e2e9f5;border-bottom:1px solid #b6bfcb"></div>
<div class="a" style="left:367px;top:176.76px;width:635px;height:13.92px;background:#ffffff;border-bottom:1px dotted #c9c9c9"></div>
<div class="a" style="left:457.6px;top:176.76px;width:1px;height:13.92px;border-left:1px dotted #d0d0d0"></div>
<div class="a" style="left:501.1px;top:176.76px;width:1px;height:13.92px;border-left:1px dotted #d0d0d0"></div>
<div class="a" style="left:704.1px;top:176.76px;width:1px;height:13.92px;border-left:1px dotted #d0d0d0"></div>
<div class="a" style="left:775.0px;top:176.76px;width:1px;height:13.92px;border-left:1px dotted #d0d0d0"></div>
<div class="a" style="left:825.1px;top:176.76px;width:1px;height:13.92px;border-left:1px dotted #d0d0d0"></div>
<div class="a" style="left:867.2px;top:176.76px;width:1px;height:13.92px;border-left:1px dotted #d0d0d0"></div>
<div class="a" style="left:903.2px;top:176.76px;width:1px;height:13.92px;border-left:1px dotted #d0d0d0"></div>
<div class="gr" style="top:176.76px"><div class="gt" style="left:3px">IS_FaXCDVSui</div><div class="a" style="left:107.3px;top:1px;width:11.3px;height:11.2px;border:1.2px solid #4a4a4a;border-radius:1px;background:#fff"></div><div class="gt" style="left:137px">Suivi cycle de vie d'une facture</div><div class="gt" style="left:340px"></div><div class="gt" style="left:503.5px">LOC</div><div class="gt" style="left:538.7px">IS_COStaFacX_Sup</div></div>
<div class="a" style="left:339px;top:190.68px;width:28px;height:13.92px;background:#e2e9f5;border-bottom:1px solid #b6bfcb"></div>
<div class="a" style="left:367px;top:190.68px;width:635px;height:13.92px;background:#f0f0f0;border-bottom:1px dotted #c9c9c9"></div>
<div class="a" style="left:457.6px;top:190.68px;width:1px;height:13.92px;border-left:1px dotted #d0d0d0"></div>
<div class="a" style="left:501.1px;top:190.68px;width:1px;height:13.92px;border-left:1px dotted #d0d0d0"></div>
<div class="a" style="left:704.1px;top:190.68px;width:1px;height:13.92px;border-left:1px dotted #d0d0d0"></div>
<div class="a" style="left:775.0px;top:190.68px;width:1px;height:13.92px;border-left:1px dotted #d0d0d0"></div>
<div class="a" style="left:825.1px;top:190.68px;width:1px;height:13.92px;border-left:1px dotted #d0d0d0"></div>
<div class="a" style="left:867.2px;top:190.68px;width:1px;height:13.92px;border-left:1px dotted #d0d0d0"></div>
<div class="a" style="left:903.2px;top:190.68px;width:1px;height:13.92px;border-left:1px dotted #d0d0d0"></div>
<div class="gr" style="top:190.68px"><div class="gt" style="left:3px">IS_FouCtlRes</div><div class="a" style="left:107.3px;top:1px;width:11.3px;height:11.2px;border:1.2px solid #4a4a4a;border-radius:1px;background:#fff"></div><div class="gt" style="left:137px">Contrôle</div><div class="gt" style="left:340px"></div><div class="gt" style="left:503.5px">LOC</div><div class="gt" style="left:538.7px">IS_TieCtlRes</div></div>
<div class="a" style="left:339px;top:204.60px;width:28px;height:13.92px;background:#fdd083;border-bottom:1px solid #b6bfcb"></div>
<div class="a" style="left:367px;top:204.60px;width:635px;height:13.92px;background:#ffffff;border-bottom:1px dotted #c9c9c9"></div>
<div class="a" style="left:457.6px;top:204.60px;width:1px;height:13.92px;border-left:1px dotted #d0d0d0"></div>
<div class="a" style="left:501.1px;top:204.60px;width:1px;height:13.92px;border-left:1px dotted #d0d0d0"></div>
<div class="a" style="left:704.1px;top:204.60px;width:1px;height:13.92px;border-left:1px dotted #d0d0d0"></div>
<div class="a" style="left:775.0px;top:204.60px;width:1px;height:13.92px;border-left:1px dotted #d0d0d0"></div>
<div class="a" style="left:825.1px;top:204.60px;width:1px;height:13.92px;border-left:1px dotted #d0d0d0"></div>
<div class="a" style="left:867.2px;top:204.60px;width:1px;height:13.92px;border-left:1px dotted #d0d0d0"></div>
<div class="a" style="left:903.2px;top:204.60px;width:1px;height:13.92px;border-left:1px dotted #d0d0d0"></div>
<div class="gr" style="top:204.60px"><div class="gt" style="left:3px">IS_ParSt</div><div class="a" style="left:107.3px;top:1px;width:11.3px;height:11.2px;border:1.2px solid #4a4a4a;border-radius:1px;background:#fff"></div><div class="gt" style="left:137px"></div><div class="gt" style="left:340px">ISIA</div><div class="gt" style="left:503.5px">LOC</div><div class="gt" style="left:538.7px">IS_ParStE</div></div>
<div class="a" style="left:367px;top:203.60px;width:91px;height:15.42px;border:2px solid #111;border-left:1.4px solid #111;border-right:none"></div>
<div class="a" style="left:436px;top:201.4px;width:220px;height:430px;background:#f2f2f2;border:1px solid #cacaca;box-shadow:1px 1px 2px rgba(0,0,0,.12)"></div>
<div class="mi" style="top:203.40px">Création (F9)</div>
<div class="mi d" style="top:222.56px">Modification (F1)</div>
<div class="mi d" style="top:241.72px">Modification Globale (Maj+F1)</div>
<div class="mi d" style="top:260.88px">Duplication (F7)</div>
<div class="mi d" style="top:280.04px">Suppression (F6)</div>
<div class="mi" style="top:299.20px">Détail (F8)</div>
<div class="ms" style="top:321.41px"></div>
<div class="mi d" style="top:324.46px">Accès Requête(s) (Ctrl+F10)</div>
<div class="ms" style="top:346.67px"></div>
<div class="mi d" style="top:349.72px">Gestion Structure (F10)</div>
<div class="mi d" style="top:368.88px">Visualisation Structure (F12)</div>
<div class="ms" style="top:391.09px"></div>
<div class="mi" style="top:394.14px">Copier dans le Navigateur</div>
<div class="mi" style="top:413.30px">Localiser dans Navigateur</div>
<div class="a" style="left:438.5px;top:432.7px;width:214.5px;height:18.5px;background:#89c4f8"></div>
<div class="mi" style="top:432.46px;color:#13305a">Définition Navigateur</div>
<div class="mi" style="top:451.62px">Test Liste Paramétrée (F11)</div>
<div class="ms" style="top:473.83px"></div>
<div class="mi" style="top:476.88px">Cas d'Emploi dans les Actions</div>
<div class="mi" style="top:496.04px">Cas d'Emploi (GFD)</div>
<div class="ms" style="top:518.25px"></div>
<div class="mi d" style="top:521.30px">Génération</div>
<svg class="a" style="left:640px;top:527.30px" width="5" height="8" viewBox="0 0 5 8"><path d="M.6 .6L4 4 .6 7.4" fill="none" stroke="#9a9a9a" stroke-width="1"/></svg>
<div class="ms" style="top:543.51px"></div>
<div class="mi d" style="top:546.56px">Exportation</div>
<svg class="a" style="left:640px;top:552.56px" width="5" height="8" viewBox="0 0 5 8"><path d="M.6 .6L4 4 .6 7.4" fill="none" stroke="#9a9a9a" stroke-width="1"/></svg>
<div class="mi" style="top:565.72px">Importation de Données</div>
<div class="ms" style="top:587.93px"></div>
<div class="mi" style="top:590.98px">Définition Filtres et Tris</div>
<div class="mi" style="top:610.14px">Condition par Défaut</div>
<svg class="a" style="left:537.2px;top:444.2px;overflow:visible" width="14" height="16" viewBox="0 0 14 16"><defs><clipPath id="cy"><rect x="-2" y="-2" width="20" height="9.1"/></clipPath></defs><path d="M1 1v12l2.9-2.7 2.1 4.4 1.9-.9-2-4.3h4z" fill="#fff" stroke="#1f1f1f" stroke-width="1" stroke-linejoin="round"/><path d="M1 1v12l2.9-2.7 2.1 4.4 1.9-.9-2-4.3h4z" fill="none" stroke="#1f2f4f" stroke-width="1" stroke-linejoin="round"/></svg>
<div class="a" style="left:460px;top:431.1px;width:120.7px;height:19.7px;background:#ffff6a;mix-blend-mode:multiply"></div>
</body></html>
